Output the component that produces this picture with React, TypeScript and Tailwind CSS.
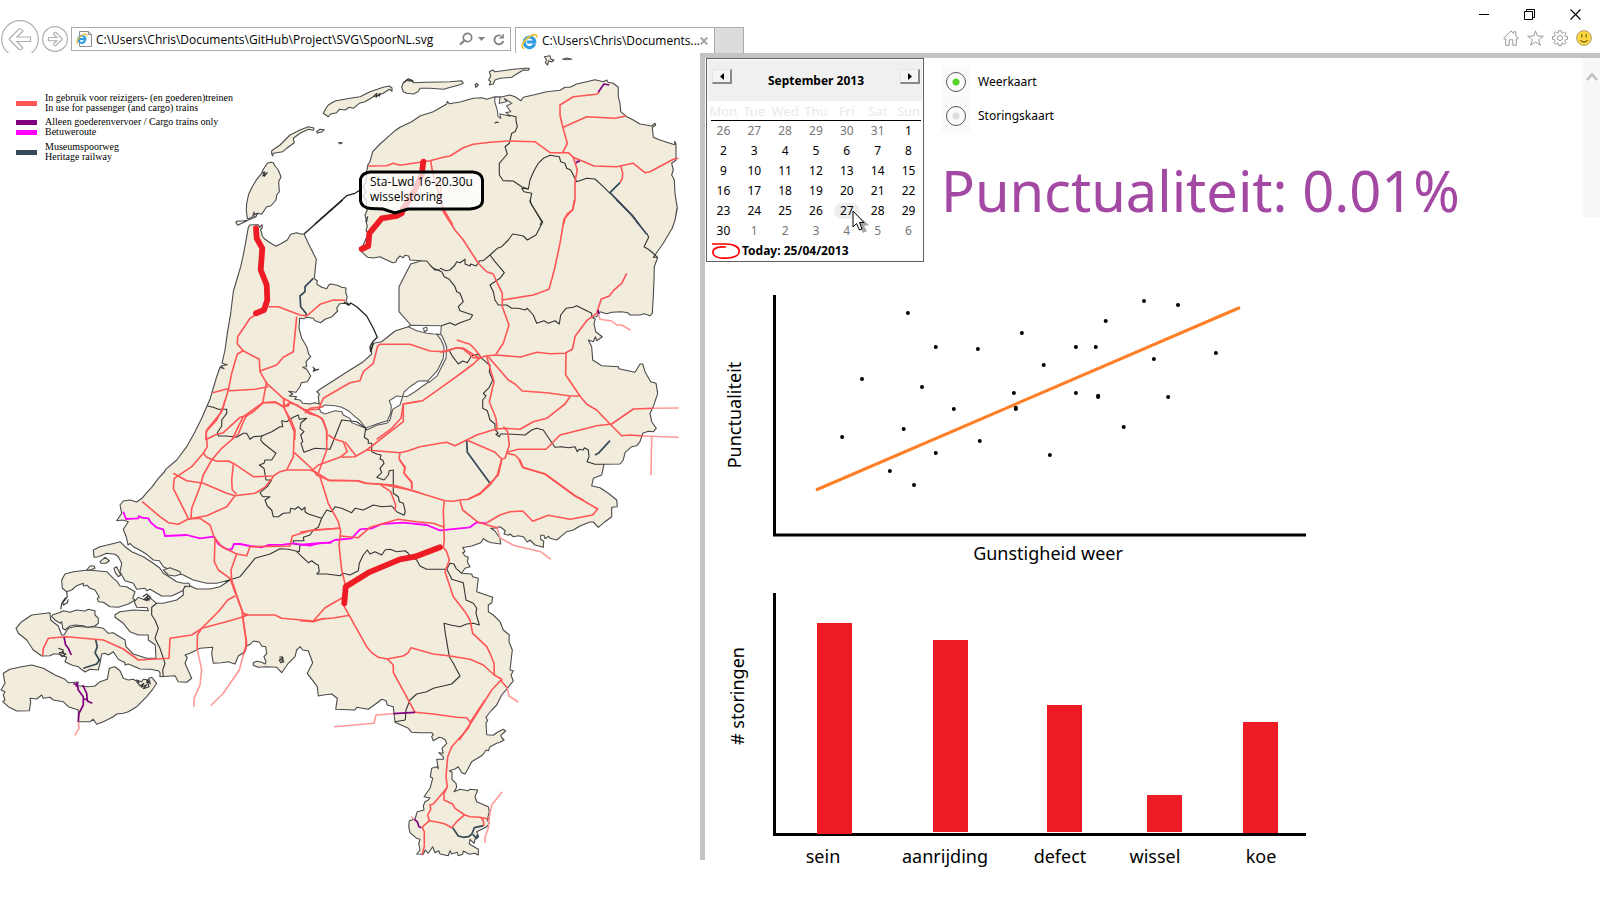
import { useState } from "react";

/* Each survey sheet has its own origin on the map and a number of units per map unit. */
const sheet =
  (ox: number, oy: number, sx = 3, sy = 3) =>
  (pts: string) =>
    pts
      .trim()
      .split(/\s+/)
      .map((p) => {
        const [x, y] = p.split(",").map(Number);
        return `${(ox + x / sx).toFixed(1)},${(oy + y / sy).toFixed(1)}`;
      })
      .join(" ");

const NW = sheet(0, 0);
const NE = sheet(400, 0);
const IJ = sheet(200, 200);
const OV = sheet(440, 200);
const ZH = sheet(80, 400);
const ZL = sheet(0, 520);
const BR = sheet(300, 460);
const LI = sheet(380, 700);

const mainland = [
  ZH("120,315 130,303 150,300 170,306 186,295 200,278 215,262 235,235 253,216 257,208 290,180 320,140 345,95 365,55 380,20"),
  IJ("30,598 38,570 50,530 60,502 72,506 62,498 82,494 66,490 75,450 82,400 92,340 100,275 110,240 122,200 130,165 140,110 145,82 150,75 175,74 179,82 186,74 187,84 182,88 187,108 195,118 210,128 228,139 245,130 262,120 272,103 290,98 302,102 312,102 325,130 349,178 345,215 343,235 352,243 350,252 365,262 380,266 386,256 392,252 412,256 425,262 438,264 437,278 442,290 438,303 446,312 430,310 418,312 410,325 413,333 396,350 375,358 362,368 345,362 340,355 320,352 310,356 299,355 297,385 305,415 320,440 326,462 332,470 318,485 320,500 308,502 320,508 332,528 322,545 304,548 300,560 288,577 266,574 278,582 268,588 290,590 284,598 300,600 308,610 330,612 345,608 358,612 355,592 358,582 350,575 360,568 400,542 450,510 490,485 515,462 513,450 520,430 545,425 585,393 625,380 632,375 597,335 597,260 615,225 632,192 665,182 630,180 626,168 615,166 610,173 600,168 590,178 588,186 578,188 560,180 540,170 520,174 503,172 490,160 478,148 490,135 505,100 498,92 502,78 497,62 503,50"),
  NW("1100,665 1095,645 1102,630 1098,600 1088,590 1098,575 1088,560 1098,545 1100,515 1103,495 1110,485 1118,455 1140,432 1165,410 1185,392 1200,382"),
  NE("0,382 35,365 60,348 100,335 140,312 142,304 148,311 180,306 220,295 245,293 260,298 285,290 300,292 330,285 345,290 363,302 370,292 400,285 440,275 480,271 495,262 510,262 530,252 560,245 585,239 610,245 620,240 624,247 640,250 655,262 655,290 660,310 662,335 680,350 700,360 720,372 755,378 765,370 767,376 757,382 760,412 780,420 805,428 824,434 824,424 828,432 828,480 815,490 820,510 815,525 823,540 825,580 832,625 825,660"),
  OV("712,20 705,60 697,84 670,130 645,165 653,172 643,200 642,240 640,290 637,340 630,347 612,341 600,345 570,345 563,338 545,335 515,337 500,341 480,335 470,350 455,352 466,358 462,370 467,395 487,410 470,422 466,410 460,425 445,420 455,440 458,480 485,497 535,500 537,506 585,517 600,492 608,492 615,515 632,545 648,550 653,580 640,620 630,640 635,665 649,685 640,695 625,694 608,700 600,725 590,737 575,740 555,758 550,780 540,792 492,793 485,825 460,835 455,858"),
  BR("877,78 900,83 925,100 950,120 952,140 935,142 935,170 915,185 895,202 880,186 870,186 840,198 820,210 800,215 782,230 770,240 750,235 746,229 735,236 732,226 722,226 722,238 731,243 730,262 705,255 690,240 682,246 670,230 655,227 640,230 630,222 625,226 612,222 616,212 600,200 582,205 572,205 584,212 600,235 602,252 575,248 565,245 550,236 542,248 515,258 495,262 488,262 495,275 488,278 495,288 505,292 502,305 510,320 495,325 485,340 515,342 518,350 535,355 530,395 578,412 575,428 565,435 565,455 580,465 600,485 610,510 628,525 627,545 637,570 630,630 640,632 633,645 640,663 622,685 605,705 590,735 575,750"),
  LI("323,45 318,52 323,62 318,68 320,104 340,106 350,98 370,88 377,93 362,106 366,114 372,120 360,127 350,130 330,140 325,152 318,150 308,165 275,185 265,205 255,222 245,218 235,200 225,207 208,212 216,216 216,238 228,250 230,262 222,275 240,268 265,272 270,268 293,270 285,290 290,305 325,320 328,335 322,360 328,370 318,382 290,395 296,410 285,418 282,430 270,418 268,432 295,448 295,465 284,460 268,463 250,453 248,463 235,467 232,457 215,462 210,452 205,467 180,462 176,452 165,458 158,440 145,460 136,450 130,463 110,462 120,450 116,430 120,418 110,415 90,398 86,380 88,362 105,357 112,335 132,330 130,318 135,305 145,300 150,294 132,290 150,265 158,235 151,230 155,205 170,200 175,206 170,178 190,178 190,170 176,158 190,160 186,145 200,130 196,120 185,113 178,112 160,122 155,110 160,104 155,98 120,98 95,97 85,85 45,67"),
  BR("285,787 280,740 262,735 258,722 245,718 230,730 205,748 170,742 165,750 107,748 112,715 95,702 70,705 55,708 52,680 22,640 38,608 25,572 8,570"),
  ZL("900,380 890,390 885,410 865,430 845,458 830,442 800,440 775,442 760,436 760,428 770,424 785,427 795,432 798,425 792,410 800,400 797,380 785,378 778,366 760,363 752,372 740,378 735,395 715,408 705,432 685,425 665,428 640,430 635,400 638,382 600,385 570,400 555,405 562,412 555,430 575,475 560,487 535,485 525,467 480,470 480,458 475,452 450,448 420,447 405,440 385,432 375,435 375,428 355,418 340,395 325,405 315,400 305,402 300,430 295,450 270,448 255,456 240,445 235,440 215,435 195,425 200,412 190,408 175,402 160,402 150,407 125,408 118,403 100,390 80,360 55,340 48,325 65,305 95,285 150,278 152,300 175,318 185,345 192,345 205,325 230,319 265,322 285,320 310,325 325,340 340,338 350,345 375,360 378,380 400,402 440,415 468,415 466,375 445,360 445,345 415,345 390,335 370,310 345,292 345,284 360,275 400,270 445,272 442,263 410,262 403,245 415,232 440,242 452,235 470,250 490,250 530,240 550,225 550,205 565,195 590,207 630,207 660,200 690,180 650,190 620,190 580,180 550,165 515,152 490,140 478,122 460,120 440,103 415,88 400,80 390,70 384,75 380,55 370,28 385,5"),
  ZH("145,365 128,360 110,362 125,340"),
].join(" ");

const islands = [
  NW("820,488 825,498 835,510 843,530 836,545 838,575 830,585 828,600 812,618 800,620 785,643 775,640 765,648 762,636 758,650 745,657 742,655 739,630 740,610 746,582 757,560 770,538 785,520 790,508 802,490 812,487"),
  NW("970,340 978,325 985,315 1005,303 1050,295 1080,290 1110,275 1150,262 1168,258 1176,264 1176,274 1168,268 1150,280 1120,290 1095,305 1078,310 1060,325 1048,322 1035,330 1018,328 1010,338 992,342 985,350"),
  NW("815,452 840,435 870,405 900,390 925,380 942,384 940,391 925,388 900,400 880,415 883,428 860,445 848,455 830,458 820,460 818,468 815,462"),
  NW("950,395 960,388 973,389 965,396 952,399"),
  NE("5,262 10,248 20,240 35,240 40,248 80,247 150,245 185,242 190,250 180,254 130,268 90,265 60,265 54,275 40,282 20,280 10,275"),
  NE("225,255 230,250 235,255 228,262"),
  NE("268,215 278,210 285,215 340,208 375,205 388,205 385,211 370,210 350,222 335,232 300,235 285,240 280,252 268,255 272,245 266,240 272,228"),
  NE("433,170 450,167 453,178 462,180 455,186 446,182 443,195 436,188 440,180"),
  NE("488,178 500,174 515,178 500,179"),
  IJ("107,67 112,63 130,63 145,60 165,52 160,45 172,40 168,50 150,58 135,65 113,76"),
  ZL("280,90 300,80 350,68 360,65 375,80 395,95 430,110 460,130 480,145 490,160 510,172 530,185 550,190 567,190 570,200 555,198 548,212 515,228 485,228 450,208 440,212 435,205 410,208 400,190 375,182 360,155 365,130 355,110 345,103 320,100 295,110 282,112"),
  ZL("185,180 195,162 220,155 245,152 265,150 320,155 340,175 352,185 360,198 380,200 405,215 398,235 405,240 385,252 355,262 330,260 310,247 295,245 292,235 298,232 285,210 270,205 262,196 250,198 250,190 230,197 215,210 200,215 187,205"),
  ZL("178,278 190,272 210,277 230,270 255,273 265,268 285,272 285,285 295,295 295,310 285,318 262,322 250,317 225,315 210,318 195,330 188,325 185,305 180,310 165,300 155,290 158,284"),
  ZL("490,150 510,143 540,155 542,163 525,168 505,165"),
  ZL("300,125 315,112 328,122 318,130 303,130"),
  ZL("342,145 350,140 362,165 355,170 346,158"),
  ZL("260,150 270,138 282,138 285,145 270,150"),
  ZL("10,460 30,448 65,440 95,435 130,445 165,465 195,478 205,488 235,486 232,497 265,500 285,498 300,485 322,478 328,445 345,440 360,452 370,475 385,480 400,478 418,488 410,480 425,485 430,478 445,480 440,488 450,485 446,475 455,472 470,490 458,508 440,530 410,560 385,575 370,580 350,582 340,590 310,605 290,613 280,598 270,605 235,605 235,570 205,560 190,545 160,540 150,532 130,535 125,525 110,537 90,535 92,545 88,572 50,573 25,560 8,545 15,540 10,525 15,515 3,510 15,490 12,475"),
];

const lakes = [
  IJ("625,380 632,376 724,377 722,403 700,402 680,400 650,392"),
  IJ("710,403 725,405 740,440 738,475 720,510 712,527 688,547 684,542 712,512 730,475 732,440 722,418"),
  IJ("685,547 665,560 645,575 620,590 608,588 612,576 630,560 655,543 680,542"),
  IJ("568,602 590,588 608,590 604,602 600,615 578,628 570,660 560,670 530,676 500,690 497,684 530,672 562,662 572,640 574,618"),
  IJ("358,624 375,615 405,617 425,622 445,632 465,650 480,662 497,684 480,678 455,668 450,655 430,645 425,635 405,632 375,642 362,636"),
  NE("285,292 300,290 298,310 320,305 312,295 335,310 320,318 332,335 318,338 328,348 300,342 302,355 294,350 292,330 284,305"),
  IJ("670,385 680,382 682,390 674,396"),
];

const borders = [
  NE("325,345 348,350 348,362 352,380 345,395 335,400 328,430 315,440 322,462 298,490 298,525 310,542 340,543 365,560 385,567 390,540 402,512 415,490 430,475 450,466 478,470 482,485 495,490 500,505 512,510 530,545 560,535 585,537 610,560 630,580"),
  NE("385,567 365,565 372,575 395,580 390,605 425,665 420,675"),
  OV("270,0 275,15 308,66 288,105 262,120 250,108 235,105 218,102 205,120 185,140 172,145 150,165 130,182 120,182 108,198 92,192 90,198 75,192 75,178 60,188 50,185 45,195 30,210 18,212 0,205"),
  OV("150,165 165,185 193,218 180,235 150,255 160,275 165,300 175,315 200,315 215,325 235,325 255,330 262,325 280,345 290,370 312,362 325,370 345,362 358,372 362,345 378,325 400,322 410,317 455,340 455,352"),
  IJ("720,210 705,210 690,195 680,183 665,183"),
  IJ("700,205 725,215 733,230 748,238 765,260 770,275 780,280 790,305 775,320 780,332 818,345 810,358 780,368 765,376 750,368 724,377"),
  OV("620,100 626,112 612,140 625,148 640,160 645,165 640,172 652,172"),
  OV("28,452 38,470 55,492 68,483 82,488 95,467 115,463 125,475 140,488 150,495 148,515 158,540 148,562 130,580 138,588 128,600 128,625 142,632 150,660 165,672 165,688 175,700 168,703 178,710 182,702 200,702 255,705 275,690 290,685 310,690 322,708 345,742 365,740 385,743 405,740 412,755 418,748 430,750 433,743 445,750 447,770 441,785 465,793 492,793"),
  ZH("382,18 400,22 415,28 440,28 440,40 425,60 425,78 412,98 415,108 440,108 470,112 490,100 500,100 510,118 520,110 545,108 575,95 600,80 608,80 605,62 620,65 640,52 655,45 658,58 680,55 663,68 660,85 672,95 662,105 668,125 663,130 672,157 705,145 750,148 765,110 785,60 805,62 830,65 857,85"),
  ZH("545,105 542,120 550,130 565,142 588,160 575,180 555,180 552,190 538,195 552,205 558,240 575,240 562,260 540,278 548,290 570,290 555,300 562,318 575,330 580,350 595,350 610,340 630,338 632,325 645,328 655,320 665,330 675,322 675,335 685,342 725,355 740,330 755,335 765,320 785,325 815,338 825,325 850,330 880,315 905,320 935,318 950,335 972,346 976,335 970,310 958,305 955,290 940,280 940,210 928,212 925,225 912,240 890,232 905,218 900,205 912,190 908,180 900,178 903,165 890,162 875,155 875,130 865,130 865,120 853,112 857,85"),
  ZH("725,355 715,382 700,390 690,405 670,412 672,422 640,422 642,432 660,435 658,455 625,448 600,446 570,462 525,475 505,500 480,530 440,542"),
  ZH("650,455 668,472 685,488 695,482 708,492 715,495 718,515 710,522 740,522 780,527 790,520 810,525 835,512 838,490 850,465 862,450 870,462 885,455 905,465 915,450 930,448 950,455 975,452 985,460"),
  BR("325,280 328,285 350,300 360,318 380,328 440,328 450,310 462,312 468,325 485,340"),
  BR("440,328 452,350 455,358 490,368 498,420 520,430 530,445 528,460 538,495 520,490 500,492 480,500 455,496 432,490 436,520 448,590 460,610 480,648 455,672 400,685 380,695 350,702 330,720 318,750 316,780 285,785"),
  ZL("470,250 455,262 455,285 465,300 475,325 465,355 480,385 495,430 488,450 490,470"),
  ZL("200,215 202,230 195,240 185,250 182,268"),
  ZL("205,238 202,248 190,255 188,245 198,232"),
  ZL("175,385 190,390 185,400 198,402 186,410 178,398 190,395 196,410"),
  ZL("428,230 440,222 452,232 440,238 445,226 432,238 450,240"),
  ZL("410,485 420,498 432,490 424,502 440,494 430,506 447,500 440,480 452,492"),
  ZL("838,412 846,410 850,415 840,418 851,424 842,428 838,420 848,414 850,428"),
  NW("785,520 795,516 788,528 802,518 792,530"),
  NW("1120,290 1130,280 1128,292 1140,280 1138,290"),
  NW("1014,428 1027,428 1018,432"),
  NE("284,370 290,366 296,368"),
  NE("12,248 25,236 40,244 22,242"),
  IJ("338,500 345,510 356,508 340,514 345,504"),
];

const dikes = [
  IJ("312,102 428,0"),
  NW("945,672 1040,587 1065,580 1080,570"),
  IJ("432,306 446,316 452,309 470,320 500,348 520,385 532,412 518,425 510,440 512,455 520,430"),
];

const rails = [
  NW("1103,498 1160,497 1180,490 1200,496"),
  NE("0,496 90,482 130,472 150,468 190,443 220,433 270,427 325,423 405,425 450,458 505,458 520,472 582,498 650,500 700,490 735,518 750,515 820,478 835,475"),
  NE("488,458 502,430 488,380 480,345 480,315 520,290 590,283 598,275"),
  NE("490,382 560,350 645,355 678,348"),
  NE("520,472 532,510 525,545 525,600 518,628 495,655 490,675"),
  OV("403,0 398,30 382,42 372,58 360,130 343,210 327,268 280,285 188,300"),
  NE("662,498 668,520 667,535 660,548"),
  NE("92,482 98,520 130,625 158,675"),
  OV("0,-60 5,10 10,35 45,90 70,120 115,190 140,215 160,222 170,245 187,280 187,320 207,375 190,430 168,463"),
  OV("140,467 168,465 242,471 290,457 330,461 375,460 397,448 406,408 440,362 470,340 478,315 484,297 508,288 520,272 545,250 560,220"),
  OV("378,460 377,525 420,588 440,613 470,630 510,672 545,707 570,705 610,708"),
  OV("515,672 580,627 640,625"),
  OV("0,457 50,443 70,447 100,473 120,475 135,468 145,468"),
  OV("50,420 90,433 105,448 122,470"),
  OV("145,470 205,540 225,552 247,573 320,578 390,588 420,588"),
  OV("390,590 375,612 320,655 280,665 240,688 195,685 165,688 110,705 80,720 45,737 20,727 0,730 -60,740"),
  OV("140,470 162,545 148,605 168,655 172,690"),
  OV("80,720 165,757 185,777 195,775 208,735 203,695 190,680"),
  OV("185,777 172,825 150,855 120,882 85,897"),
  OV("200,757 235,748 318,748 360,705 420,690 470,677 515,672"),
  OV("200,760 225,765 240,780 250,803 315,822 405,888 430,900"),
  BR("605,0 595,45 570,70 540,100 505,118 480,120 460,124 435,122 330,90 245,73 195,70 170,62 90,62 50,45 40,30"),
  BR("657,0 668,22 735,42 825,107 893,147 878,165 810,178 745,166 698,184 668,153 630,155 600,165 560,188"),
  BR("480,123 488,150 535,187 595,205"),
  BR("433,123 430,150 433,240 430,262 440,275 448,300 435,335 460,410 495,455 510,480 518,520 560,560 570,580 582,610 583,645 605,658"),
  BR("622,683 605,665 605,658 575,690 515,785 478,840"),
  BR("345,757 400,762 470,772 500,773 512,788"),
  BR("133,430 133,440 200,560 215,578 235,592 262,597 310,588 325,578 333,563 400,582 450,588 510,598 550,615 583,645"),
  BR("262,597 280,615 280,637 345,757"),
  BR("60,50 85,130 115,185 122,215 117,255 125,330 137,380"),
  BR("0,482 40,485 65,477 100,474 150,466"),
  BR("40,483 75,443 130,412"),
  BR("240,73 272,95 287,135 285,152"),
  BR("298,0 315,20 312,40 335,68 335,88"),
  BR("0,217 40,210 118,205"),
  BR("122,228 175,233 210,202 295,178 350,185 400,190 433,202"),
  ZH("187,305 240,350 265,368 295,373 325,357 360,355 390,375 402,410 425,440 470,462 500,467 510,440 630,438 637,408 690,392 775,385"),
  ZH("405,415 403,485 415,510 450,535 470,590 490,640 505,645"),
  ZH("470,462 453,510 455,540 485,630 498,720 497,750"),
  ZH("325,355 310,325 280,265 283,235 335,200 370,160 382,140 378,95 410,60 430,20 435,0"),
  ZH("333,355 335,325 360,260 370,225 395,180 425,145 475,102 490,65 500,47 520,35 550,8 590,8 610,20 628,10"),
  ZH("380,118 410,103 430,98 480,52 500,47"),
  ZH("370,160 380,172 410,184 445,183 465,193 520,230 580,228 600,215 620,210 640,170 643,95 612,22 612,0"),
  ZH("460,193 455,240 457,270 470,283"),
  ZH("280,220 320,242 370,250 440,280 465,287 525,280 555,262 580,230"),
  ZH("465,287 440,320 380,347 325,357"),
  ZH("620,210 690,210 705,215 745,240 835,242 860,250 940,255 1020,278"),
  ZH("643,158 700,210"),
  ZH("715,220 740,150 740,95 730,60 715,48 690,42 650,15 628,8"),
  ZH("700,208 715,195 780,172 802,155 790,125 765,118 745,105"),
  ZH("785,172 825,170 860,150 970,65 970,12 1020,3"),
  ZH("795,125 828,168"),
  ZH("860,150 960,158 985,152 1020,140"),
  ZH("960,160 957,175 975,205 972,220 995,245 995,265"),
  ZH("490,645 585,645 605,655 700,663 735,655"),
  ZL("745,283 730,290 690,302 605,325 575,345 510,355 507,415 415,420 370,387 310,360 200,350 145,355 130,385 128,407"),
  ZL("705,228 683,240 655,275 605,325 592,345 592,390"),
  ZL("728,290 740,370 730,405"),
  IJ("205,320 235,320 300,345 320,348 360,313 400,300 435,301"),
  IJ("165,345 150,355 113,410 112,432 130,452 112,462 95,520 85,570 65,635 20,690 17,720"),
  IJ("125,450 178,478 180,515 200,550 250,595 320,632 365,655 380,690 380,720"),
  IJ("180,513 230,495 250,472 280,455 290,350"),
  IJ("38,578 80,567 90,572 165,568 205,560"),
  IJ("200,545 188,608 130,650 115,680 97,718"),
  IJ("188,608 225,605 250,620 275,665 285,690 284,720"),
  IJ("250,595 252,620 265,618 270,605"),
  IJ("310,630 355,628 370,595 450,548 480,542 490,515 520,490 533,438 540,433 630,433 690,453 735,455 770,443 790,445 838,475"),
  IJ("838,475 820,492 780,522 720,565 668,602 610,612 603,655 575,685 530,718"),
  IJ("315,640 330,625 370,620"),
  LI("315,0 275,60 265,85 215,140 203,170 198,230 202,260 192,280 192,300 218,312 225,325 255,345 270,350 300,352 328,358"),
  LI("200,265 160,312 150,315 152,328 143,345 148,362 126,382 133,395 133,440 126,465"),
  LI("148,362 175,367 195,372 215,383 230,365 255,343"),
  LI("303,352 310,362 312,378"),
];

const foreignRails = [
  OV("475,340 480,358 515,363 530,375 545,375 572,391"),
  OV("610,708 716,712"),
  OV("635,710 633,826"),
  OV("640,625 716,624"),
  BR("590,200 600,233 640,256 722,275 752,298"),
  BR("622,683 627,708 655,726"),
  BR("102,800 222,790 228,765 280,761"),
  ZL("592,388 605,450 600,495 582,535 582,560"),
  ZL("730,405 718,450 670,520 632,557"),
  ZL("235,605 237,625 224,646"),
  LI("93,350 105,360"),
  LI("367,275 335,315 328,350 325,385 315,410 315,428"),
];

const cargo = [
  NE("595,276 612,252 628,255"),
  NE("529,490 532,484 540,484"),
  OV("474,330 476,342"),
  BR("280,761 345,757"),
  LI("103,358 112,365 117,380 124,383"),
  ZL("192,352 197,375 205,385 214,405"),
  ZL("220,492 232,492 235,510 250,530 250,555 237,580 235,605"),
  ZL("248,495 260,520 262,543 277,550"),
  ZL("230,488 228,500"),
  ZL("250,538 262,538"),
];

const betuwe = [
  ZH("130,335 138,357 175,355 177,348 185,353 205,355 212,367 230,383 250,388 255,408 320,405 360,415 402,410 415,432 440,448 455,448 462,432 480,432 510,438 545,442 565,435 610,434 640,430 690,437 715,430 755,428"),
  BR("0,255 30,252 90,247 105,240 155,235 180,208 215,205 245,192 310,188 380,195 420,211 510,202 530,187 560,190"),
];

const museum = [
  NE("660,548 630,578 700,650 718,675"),
  OV("530,0 575,45 620,103"),
  OV("80,722 82,757 150,850"),
  OV("465,765 475,760 510,722"),
  IJ("340,235 315,260 315,275 300,288 302,320 318,340 318,348"),
  ZL("287,360 292,380 285,398 298,420 290,432 250,445"),
  LI("218,383 235,408 250,412 265,410 275,403 283,383 310,377"),
  LI("278,403 290,415 292,405"),
];

const disrupted = [
  IJ("168,85 170,115 187,145 182,210 200,255 202,300 192,330 168,340"),
  IJ("485,147 505,138 508,100 545,55 590,48 605,40") + " " + NE("10,625 40,580 65,525 70,485"),
  BR("133,430 137,380 205,338 300,298 345,290 420,262"),
];

function Lines({ items, stroke, width }: { items: string[]; stroke: string; width: number }) {
  return (
    <g fill="none" stroke={stroke} strokeWidth={width} strokeLinejoin="round">
      {items.map((points) => (
        <polyline key={points} points={points} />
      ))}
    </g>
  );
}

const legend = [
  { color: "bg-[#ff5555]", lines: ["In gebruik voor reizigers- (en goederen)treinen", "In use for passenger (and cargo) trains"] },
  { color: "bg-[#800080]", lines: ["Alleen goederenvervoer / Cargo trains only"] },
  { color: "bg-[#ff00ff]", lines: ["Betuweroute"] },
  { color: "bg-[#374858]", lines: ["Museumspoorweg", "Heritage railway"] },
];
const legendGap = ["", "mt-1", "", "mt-[5px]"];

function RailMap() {
  return (
    <section className="relative w-[44.0625%] shrink-0 overflow-hidden border-r-[5px] border-[#c3c3c3]" aria-label="Spoorkaart">
      <svg viewBox="0 53 700 807" className="block w-full">
        <g fill="#f2ecdc" stroke="#4a4a4a" strokeWidth="1.1" strokeLinejoin="round">
          <polygon points={mainland} />
          {islands.map((p) => (
            <polygon key={p} points={p} />
          ))}
        </g>
        <g fill="#ffffff" stroke="#5a5a5a" strokeWidth="1.1">
          {lakes.map((p) => (
            <polygon key={p} points={p} />
          ))}
        </g>
        <Lines items={borders} stroke="#333333" width={1.1} />
        <Lines items={dikes} stroke="#222222" width={1.3} />
        <Lines items={museum} stroke="#374858" width={1.7} />
        <Lines items={foreignRails} stroke="#ff9999" width={1.6} />
        <Lines items={betuwe} stroke="#ff00ff" width={1.8} />
        <Lines items={rails} stroke="#ff5555" width={1.6} />
        <Lines items={cargo} stroke="#800080" width={1.7} />
        <g fill="none" stroke="#ed1c24" strokeWidth="5.8" strokeLinecap="round" strokeLinejoin="round">
          {disrupted.map((p) => (
            <polyline key={p} points={p} />
          ))}
        </g>
        <path
          d="M370 172 Q362 173 360.500 179 V201 Q362 208 371 208.500 L383 209 L395 213 L408 209 H470 Q482 208 482.500 201 V180 Q482 173 473 172 Z"
          fill="#ffffff"
          fillOpacity="0.76"
          stroke="#000000"
          strokeWidth="3"
        />
        <text x="370" y="186" fontSize="12" className="font-['Open_Sans',sans-serif]">Sta-Lwd 16-20.30u</text>
        <text x="370" y="201" fontSize="12" className="font-['Open_Sans',sans-serif]">wisselstoring</text>
      </svg>
      <ul className="absolute left-4 top-10 font-['Liberation_Serif',serif] text-[10px] leading-[10px]">
        {legend.map((row, i) => (
          <li key={row.lines[0]} className={`flex items-center gap-2 ${legendGap[i]}`}>
            <span className={`h-[5px] w-[21px] ${row.color}`} />
            <span>
              {row.lines.map((l) => (
                <span key={l} className="block whitespace-nowrap">{l}</span>
              ))}
            </span>
          </li>
        ))}
      </ul>
    </section>
  );
}

function IeLogo({ size }: { size: number }) {
  return (
    <svg width={size} height={size} viewBox="0 0 16 16" className="shrink-0">
      <path d="M12.800 10.200 A5 5 0 1 1 13 8.500 H5.500" fill="none" stroke="#2f9de0" strokeWidth="2.900" />
      <path d="M3 14.500 C-1.500 14 2.500 6 9 2.800 C13 .8 15.600 1 14.600 4.500" fill="none" stroke="#f2c02c" strokeWidth="1.500" />
    </svg>
  );
}

function BrowserBar() {
  return (
    <header className="flex h-[53px] justify-between overflow-hidden font-['Open_Sans',sans-serif]">
      <div className="flex grow items-start pt-5">
        <button aria-label="Terug" className="-mb-2 ml-px shrink-0">
          <svg width="38" height="38" viewBox="0 0 38 38" fill="none" stroke="#b0b0b0">
            <circle cx="19" cy="19" r="18.300" strokeWidth="1.200" />
            <path d="M8 19 L18 9 Q21 8 22 11 L16 17 H29.500 V21.500 H16 L22 28 Q20 31 17 28.500 Z" strokeWidth="1.200" />
          </svg>
        </button>
        <button aria-label="Vooruit" className="ml-[3px] mt-[6px] shrink-0">
          <svg width="26" height="26" viewBox="0 0 26 26" fill="none" stroke="#b0b0b0">
            <circle cx="13" cy="13" r="12.400" strokeWidth="1.200" />
            <path d="M20.500 13 L14 19.500 Q11.500 20 11.500 18 L15 14.700 H6.500 V11.500 H15 L11.500 8 Q12 5.500 14 6.500 Z" strokeWidth="1.100" />
          </svg>
        </button>
        <div className="ml-[3px] mt-[7px] flex h-6 w-[440px] items-center border border-[#ababab] px-1">
          <svg width="17" height="18" viewBox="0 0 17 18" className="shrink-0">
            <path d="M3.500 1.500 H12.500 L15.500 4.500 V16.500 H3.500 Z M12.500 1.500 V4.500 H15.500" fill="#ffffff" stroke="#8a8f96" />
            <g transform="translate(0 3) scale(.72)">
              <path d="M12.800 10.200 A5 5 0 1 1 13 8.500 H5.500" fill="none" stroke="#2f9de0" strokeWidth="2.800" />
              <path d="M3 14.500 C-1.500 14 2.500 6 9 2.800 C13 .8 15.600 1 14.600 4.500" fill="none" stroke="#f2c02c" strokeWidth="1.600" />
            </g>
          </svg>
          <input
            aria-label="Adres"
            className="ml-[3px] min-w-0 grow bg-transparent pt-px text-[12px] outline-none"
            defaultValue="C:\Users\Chris\Documents\GitHub\Project\SVG\SpoorNL.svg"
          />
          <button aria-label="Zoeken" className="shrink-0">
            <svg width="14" height="14" viewBox="0 0 14 14" fill="none" stroke="#808080">
              <circle cx="8.500" cy="5.500" r="4.200" strokeWidth="1.700" />
              <path d="M5.500 8.500 L1 12.500" strokeWidth="2.200" />
            </svg>
          </button>
          <button aria-label="Zoekopties" className="ml-[5px] shrink-0">
            <svg width="7" height="4" viewBox="0 0 7 4"><path d="M0 0 H7 L3.500 4 Z" fill="#808080" /></svg>
          </button>
          <button aria-label="Vernieuwen" className="ml-2 mr-px shrink-0">
            <svg width="12" height="13" viewBox="0 0 12 13" fill="none">
              <path d="M10.300 8 A4.500 4.500 0 1 1 7.500 2.600" stroke="#808080" strokeWidth="1.800" />
              <path d="M10.800 .5 V5.500 H5.800 Z" fill="#808080" />
            </svg>
          </button>
        </div>
        <div className="ml-1 mt-[7px] flex h-[26px] w-[200px] shrink-0 items-center border border-b-0 border-[#ababab] px-[5px] pt-px">
          <IeLogo size={17} />
          <span className="ml-1 grow whitespace-nowrap text-[12px]">C:\Users\Chris\Documents...</span>
          <button aria-label="Tabblad sluiten" className="mr-px shrink-0">
            <svg width="8" height="8" viewBox="0 0 8 8"><path d="M.7 .7 L7.300 7.300 M7.300 .7 L.7 7.300" stroke="#9a9a9a" strokeWidth="1.700" /></svg>
          </button>
        </div>
        <button aria-label="Nieuw tabblad" className="mt-[7px] h-[26px] w-[29px] shrink-0 border border-b-0 border-l-0 border-[#ababab] bg-[#dcdcdc]" />
      </div>
      <div className="flex shrink-0 flex-col items-end">
        <div className="mr-[19px] mt-[9px] flex h-[10px] items-center gap-[35px]">
          <button aria-label="Minimaliseren" className="h-px w-[10px] bg-black" />
          <button aria-label="Verkleinen">
            <svg width="11" height="11" viewBox="0 0 11 11" fill="none" stroke="#000000">
              <path d="M.5 2.500 H8.500 V10.500 H.5 Z M2.500 2.500 V.5 H10.500 V8.500 H8.500" />
            </svg>
          </button>
          <button aria-label="Sluiten">
            <svg width="11" height="11" viewBox="0 0 11 11"><path d="M.5 .5 L10.500 10.500 M10.500 .5 L.5 10.500" stroke="#000000" strokeWidth="1.100" /></svg>
          </button>
        </div>
        <div className="mr-2 mt-[11px] flex items-center gap-2">
          <button aria-label="Startpagina">
            <svg width="16" height="16" viewBox="0 0 16 16" fill="none" stroke="#999999" strokeLinejoin="round">
              <path d="M.7 8.300 L8 .9 L10.500 3.300 V1.800 H12.800 V5.600 L15.300 8.300 L14 9.300 L13.300 8.800 V15.300 H9.800 V9.800 H6.200 V15.300 H2.700 V8.800 L2 9.300 Z" />
            </svg>
          </button>
          <button aria-label="Favorieten">
            <svg width="17" height="16" viewBox="0 0 17 16" fill="none" stroke="#999999">
              <path d="M8.500 .8 L10.400 6 L16.300 6.200 L11.700 9.700 L13.400 15.200 L8.500 11.900 L3.600 15.200 L5.300 9.700 L.7 6.200 L6.600 6 Z" />
            </svg>
          </button>
          <button aria-label="Extra">
            <svg width="16" height="16" viewBox="0 0 16 16" fill="none" stroke="#999999">
              <path d="M6.700 .6 H9.300 L9.700 2.700 L11 3.200 L12.600 1.900 L14.200 3.500 L12.900 5.200 L13.400 6.400 L15.500 6.700 V9.300 L13.400 9.700 L12.900 11 L14.200 12.600 L12.500 14.200 L11 12.900 L9.700 13.400 L9.300 15.500 H6.700 L6.300 13.400 L5 12.900 L3.400 14.200 L1.800 12.600 L3.100 11 L2.600 9.700 L.5 9.300 V6.700 L2.600 6.300 L3.100 5 L1.800 3.400 L3.400 1.800 L5 3.100 L6.300 2.600 Z" />
              <circle cx="8" cy="8" r="2.500" />
            </svg>
          </button>
          <button aria-label="Feedback">
            <svg width="16" height="16" viewBox="0 0 16 16">
              <circle cx="8" cy="8" r="7.400" fill="#ffd83d" stroke="#a8a080" />
              <path d="M5.800 4 V7.500 M10.200 4 V7.500" stroke="#8a7a20" strokeWidth="1.500" />
              <path d="M4 10 Q8 14 12 10" fill="none" stroke="#8a7a20" strokeWidth="1.200" />
            </svg>
          </button>
        </div>
      </div>
    </header>
  );
}

const weekdays = ["Mon", "Tue", "Wed", "Thu", "Fri", "Sat", "Sun"];
const weeks = [
  [26, 27, 28, 29, 30, 31, 1],
  [2, 3, 4, 5, 6, 7, 8],
  [9, 10, 11, 12, 13, 14, 15],
  [16, 17, 18, 19, 20, 21, 22],
  [23, 24, 25, 26, 27, 28, 29],
  [30, 1, 2, 3, 4, 5, 6],
];
const isOutside = (week: number, day: number) => (week === 0 && day > 7) || (week === 5 && day < 7);

const arrowButton =
  "flex h-[15px] w-5 items-center justify-center border border-b-2 border-r-2 border-[#e4e4e4] border-b-[#888888] border-r-[#888888] bg-[#f4f4f4]";

function Calendar() {
  return (
    <section className="relative ml-px w-[218px] shrink-0 self-start border border-[#606060] bg-white text-[13px] leading-5">
      <div className="flex h-[42px] items-start justify-between border border-b-0 border-white bg-[#f0f0f0] pl-1 pr-[2px] pt-[9px]">
        <button aria-label="Vorige maand" className={arrowButton}>
          <svg width="4" height="7" viewBox="0 0 4 7"><path d="M4 0 V7 L0 3.500 Z" /></svg>
        </button>
        <h2 className="pt-[2px] text-[12px] font-bold">September 2013</h2>
        <button aria-label="Volgende maand" className={arrowButton}>
          <svg width="4" height="7" viewBox="0 0 4 7"><path d="M0 0 V7 L4 3.500 Z" /></svg>
        </button>
      </div>
      <div className="ml-1 mr-[2px] h-5 border-b border-black" />
      <table className="-mt-5 ml-px w-full table-fixed border-collapse text-center">
        <thead>
          <tr className="h-5 text-[#e9e9e9]">
            {weekdays.map((d) => (
              <th key={d} className="p-0 font-normal">{d}</th>
            ))}
          </tr>
        </thead>
        <tbody className="text-[12px]">
          {weeks.map((week, w) => (
            <tr key={w} className="h-5">
              {week.map((day) => (
                <td key={day} className={isOutside(w, day) ? "p-0 text-[#777777]" : "p-0"}>
                  <span className={w === 4 && day === 27 ? "inline-block w-[26px] rounded-full bg-[#eeeeee] leading-4" : ""}>{day}</span>
                </td>
              ))}
            </tr>
          ))}
        </tbody>
      </table>
      <p className="flex h-5 items-center text-[12px] font-bold">
        <svg width="30" height="18" viewBox="0 0 32 18" preserveAspectRatio="none" className="mr-px ml-1" fill="none" stroke="#ff0000" strokeWidth="1.700">
          <path d="M1 2 H16 C24 2 31 5 30 10 C29 17 8 18 3 13 C0 8 4 4 16 5" />
        </svg>
        Today: 25/04/2013
      </p>
      <svg width="18" height="24" viewBox="0 0 18 24" className="absolute left-[145px] top-[151px]">
        <path d="M4 4 L17 15 L12 16 L15 21 L11 23 L9 18 Z" fill="#000000" opacity=".35" />
        <path d="M1 1 V17 L4.500 13.500 L7.500 20 L10 19 L7.500 12.500 H12 Z" fill="#ffffff" stroke="#000000" />
      </svg>
    </section>
  );
}

function KaartKeuze() {
  const [kaart, setKaart] = useState("Weerkaart");
  return (
    <fieldset className="mt-[5px] flex flex-col py-[2px]">
      {["Weerkaart", "Storingskaart"].map((naam) => (
        <label key={naam} className="flex h-[34px] items-center text-[12px]">
          <span className="mr-[7px] flex h-[34px] w-[30px] items-center justify-center bg-[#fafafa]">
            <input
              type="radio"
              name="kaart"
              checked={kaart === naam}
              onChange={() => setKaart(naam)}
              className="size-5 appearance-none rounded-full border border-[#555555] bg-[radial-gradient(circle,#dddddd_3px,transparent_4px)] checked:bg-[radial-gradient(circle,#55d42a_3px,transparent_4px)]"
            />
          </span>
          {naam}
        </label>
      ))}
    </fieldset>
  );
}

const scatter = sheet(720, 280, 2.6133, 3)(
  "491,99 564,201 674,207 789,159 846,255 930,201 982,201 1008,123 1108,63 1197,75 1296,219 1134,237 371,297 528,321 611,387 768,339 930,339 1171,351 1055,441 862,525 679,483 564,519 480,447 319,471 444,573 507,615 773,383 773,387 988,347 988,351",
)
  .split(" ")
  .map((p) => p.split(","));

function PunctualityChart() {
  return (
    <svg viewBox="720 280 600 300" className="ml-[15px] block w-[600px] max-w-full" fontSize="18">
      <path d="M774.500 295 V535 H1306" fill="none" stroke="#000000" strokeWidth="3" />
      <path d="M816 490 L1240 307.500" stroke="#ff7f27" strokeWidth="3" />
      {scatter.map(([x, y]) => (
        <circle key={`${x}-${y}`} cx={x} cy={y} r="2" />
      ))}
      <text x="1048" y="560" textAnchor="middle">Gunstigheid weer</text>
      <text transform="translate(741 415) rotate(-90)" textAnchor="middle">Punctualiteit</text>
    </svg>
  );
}

const storingen = [
  { naam: "sein", x: 817, y: 623, base: 834, label: 823 },
  { naam: "aanrijding", x: 933, y: 640, base: 832, label: 945 },
  { naam: "defect", x: 1047, y: 705, base: 832, label: 1060 },
  { naam: "wissel", x: 1147, y: 795, base: 832, label: 1155 },
  { naam: "koe", x: 1243, y: 722, base: 833, label: 1261 },
];

function StoringenChart() {
  return (
    <svg viewBox="720 580 600 300" className="ml-[15px] block w-[600px] max-w-full" fontSize="18">
      <path d="M774.500 593 V834.500 H1306" fill="none" stroke="#000000" strokeWidth="3" />
      {storingen.map((s) => (
        <g key={s.naam}>
          <rect x={s.x} y={s.y} width="35" height={s.base - s.y} fill="#ed1c24" />
          <text x={s.label} y="863" textAnchor="middle">{s.naam}</text>
        </g>
      ))}
      <text transform="translate(744 696) rotate(-90)" textAnchor="middle"># storingen</text>
    </svg>
  );
}

export default function App() {
  return (
    <div className="min-h-screen bg-white text-black">
      <BrowserBar />
      <main className="flex items-start">
        <RailMap />
        <div className="min-w-0 grow border-t-[5px] border-[#c3c3c3] font-['Noto_Sans',sans-serif]">
          <div className="flex h-[222px]">
            <Calendar />
            <div className="ml-[17px] min-w-0 grow">
              <KaartKeuze />
              <h1 className="mt-[15px] whitespace-nowrap text-[56px] leading-[80px] text-[#a349a4]">Punctualiteit: 0.01%</h1>
            </div>
            <div className="flex h-[159px] w-[17px] shrink-0 justify-center bg-[#f8f8f8] pt-[14px]">
              <svg width="12" height="9" viewBox="0 0 12 9"><path d="M1 8 L6 2.500 L11 8" fill="none" stroke="#c0c0c0" strokeWidth="2.600" /></svg>
            </div>
          </div>
          <PunctualityChart />
          <StoringenChart />
        </div>
      </main>
    </div>
  );
}
